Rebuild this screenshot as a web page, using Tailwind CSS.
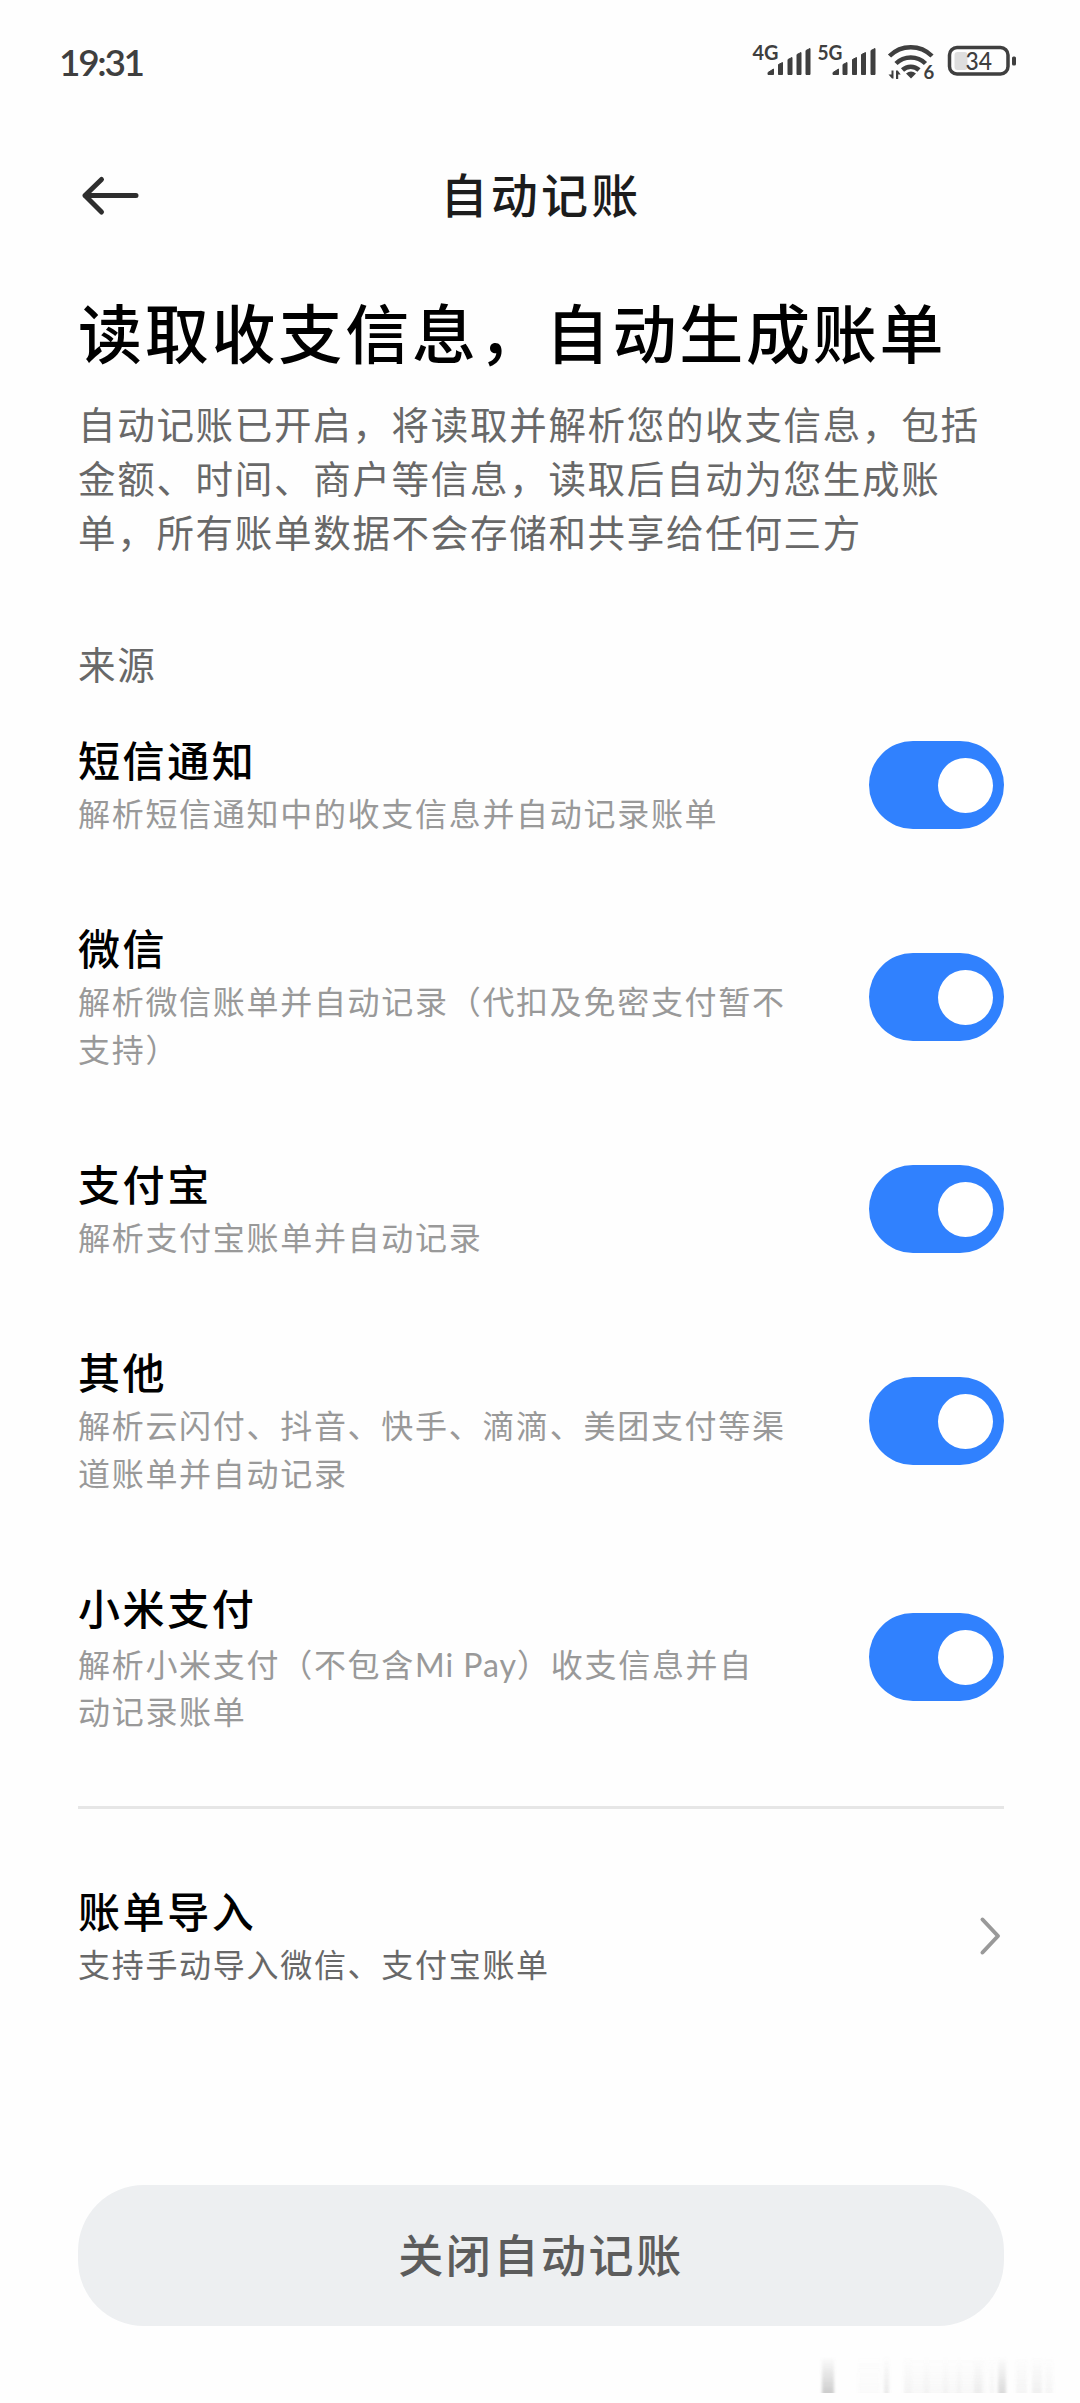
<!DOCTYPE html>
<html lang="zh-CN">

<head>
    <meta charset="UTF-8" />
    <meta name="viewport" content="width=device-width, initial-scale=1.0" />
    <title>自动记账</title>
    <script src="https://cdn.jsdelivr.net/npm/@tailwindcss/browser@4"></script>
</head>

<body class="bg-[#fefefe] font-['Noto_Sans_CJK_SC',sans-serif] select-none">
    <div class="w-[1080px] h-[2403px] flex flex-col overflow-hidden">
        <!-- Status bar -->
        <div class="h-[122px] shrink-0 flex items-center justify-between pl-[59px] pr-[60px]">
            <span class="font-['Lato',sans-serif] font-semibold text-[37px] leading-none tracking-[-2.300px] text-[#3f3f3f]">19:31</span>
            <svg class="w-[270px] h-[48px] mt-[2px]" viewBox="750 38 270 48" fill="#3f3f3f" aria-hidden="true">
                <g font-family="Lato, sans-serif" font-weight="700">
                    <text x="752.5" y="60" font-size="21" textLength="26" lengthAdjust="spacingAndGlyphs">4G</text>
                    <text x="817.5" y="60" font-size="21" textLength="25" lengthAdjust="spacingAndGlyphs">5G</text>
                    <text x="923.5" y="79" font-size="18.500">6</text>
                </g>
                <g id="signal" stroke="#3f3f3f" stroke-width="1" stroke-linejoin="round">
                    <path d="M768 74.500v-2l5.500-3.500v5.500zM778.500 74.500v-10l4-2v12zM788 74.500v-15l4-2v17zM797 74.500v-20l4-2v22zM806 74.500v-24l4-2v26z" />
                    <path d="M833 74.500v-2l5.500-3.500v5.500zM843 74.500v-10l4-2v12zM852.500 74.500v-15l4-2v17zM861.500 74.500v-20l4-2v22zM871 74.500v-24l4-2v26z" />
                </g>
                <g fill="none" stroke="#3f3f3f" stroke-width="4.500">
                    <path d="M889.500 56a30 30 0 0 1 42.500 0" />
                    <path d="M896 63.500a21 21 0 0 1 29.500 0" />
                    <path d="M902.500 70a12 12 0 0 1 16.500 0" />
                </g>
                <path d="M906 73.500q5-4 10 0l-5 5zM891.500 70.500h2v8h-1.500l-3.500-4h3zM896 70.500h1.700l3 4h-2.500v4.500h-2.200z" />
                <rect x="949.500" y="47.500" width="58.500" height="26.500" rx="7.500" fill="none" stroke="#3f3f3f" stroke-width="3.500" />
                <rect x="954.500" y="52" width="13" height="18" rx="3" fill="#dedede" />
                <text x="965.500" y="69.500" font-size="24.500" textLength="26.500" lengthAdjust="spacingAndGlyphs" font-family="Lato, sans-serif" font-weight="500">34</text>
                <rect x="1012" y="56.500" width="4" height="9" rx="1.500" />
            </svg>
        </div>

        <!-- Title bar -->
        <header class="h-[146px] shrink-0 grid grid-cols-[1fr_auto_1fr] items-center pl-[78px] pr-[76px]">
            <svg class="w-[64px] h-[44px]" viewBox="78 173 64 44" fill="none" stroke="#2e2e2e" stroke-width="5" stroke-linecap="round" stroke-linejoin="round">
                <path d="M136 195.500H85M101.500 179.500L85 195.500l16.500 16.500" />
            </svg>
            <h1 class="-mt-[5px] text-[47px] leading-[60px] font-medium tracking-[3.300px] text-[#1c1c1c]">自动记账</h1>
        </header>

        <main class="pl-[78px] pr-[76px]">
            <h2 class="pt-[20px] text-[64px] leading-[84px] font-medium tracking-[2.800px] text-black whitespace-nowrap">读取收支信息，自动生成账单</h2>
            <p class="pt-[24px] text-[37.500px] leading-[54px] tracking-[1.700px] text-[#686868] whitespace-nowrap">
                自动记账已开启，将读取并解析您的收支信息，包括<br />金额、时间、商户等信息，读取后自动为您生成账<br />单，所有账单数据不会存储和共享给任何三方
            </p>
            <h3 class="pt-[78px] pb-px text-[37.500px] leading-[54px] tracking-[1.700px] text-[#686868]">来源</h3>

            <ul id="sources">
                <li class="flex items-center justify-between py-[41px]">
                    <div class="-mt-[2px] mb-[2px]">
                        <h4 class="text-[42px] leading-[58px] font-medium tracking-[2.600px] text-black">短信通知</h4>
                        <p class="text-[32px] leading-[48px] tracking-[1.700px] text-[#999]">解析短信通知中的收支信息并自动记录账单</p>
                    </div>
                    <span class="w-[135px] h-[88px] rounded-full bg-[#3081fe] flex items-center justify-end pr-[11px]"><i class="size-[55px] rounded-full bg-white"></i></span>
                </li>
                <li class="flex items-center justify-between py-[41px]">
                    <div class="-mt-[2px] mb-[2px]">
                        <h4 class="text-[42px] leading-[58px] font-medium tracking-[2.600px] text-black">微信</h4>
                        <p class="text-[32px] leading-[48px] tracking-[1.700px] text-[#999]">解析微信账单并自动记录（代扣及免密支付暂不<br />支持）</p>
                    </div>
                    <span class="w-[135px] h-[88px] rounded-full bg-[#3081fe] flex items-center justify-end pr-[11px]"><i class="size-[55px] rounded-full bg-white"></i></span>
                </li>
                <li class="flex items-center justify-between py-[41px]">
                    <div class="-mt-[2px] mb-[2px]">
                        <h4 class="text-[42px] leading-[58px] font-medium tracking-[2.600px] text-black">支付宝</h4>
                        <p class="text-[32px] leading-[48px] tracking-[1.700px] text-[#999]">解析支付宝账单并自动记录</p>
                    </div>
                    <span class="w-[135px] h-[88px] rounded-full bg-[#3081fe] flex items-center justify-end pr-[11px]"><i class="size-[55px] rounded-full bg-white"></i></span>
                </li>
                <li class="flex items-center justify-between py-[41px]">
                    <div class="-mt-[2px] mb-[2px]">
                        <h4 class="text-[42px] leading-[58px] font-medium tracking-[2.600px] text-black">其他</h4>
                        <p class="text-[32px] leading-[48px] tracking-[1.700px] text-[#999]">解析云闪付、抖音、快手、滴滴、美团支付等渠<br />道账单并自动记录</p>
                    </div>
                    <span class="w-[135px] h-[88px] rounded-full bg-[#3081fe] flex items-center justify-end pr-[11px]"><i class="size-[55px] rounded-full bg-white"></i></span>
                </li>
                <li class="flex items-center justify-between py-[41px]">
                    <div class="-mt-[2px]">
                        <h4 class="text-[42px] leading-[58px] font-medium tracking-[2.600px] text-black">小米支付</h4>
                        <p class="pt-[4px] text-[32px] leading-[47px] tracking-[1.700px] text-[#999]">解析小米支付（不包含<span class="font-['Lato',sans-serif] leading-none tracking-[1px]">Mi Pay</span>）收支信息并自<br />动记录账单</p>
                    </div>
                    <span class="w-[135px] h-[88px] rounded-full bg-[#3081fe] flex items-center justify-end pr-[11px]"><i class="size-[55px] rounded-full bg-white"></i></span>
                </li>
            </ul>

            <hr class="mt-[31px] border-0 h-[3px] bg-[#e6e6e6]" />

            <a class="mt-[72px] flex items-center justify-between">
                <div>
                    <h4 class="text-[42px] leading-[58px] font-medium tracking-[2.600px] text-black">账单导入</h4>
                    <p class="text-[32px] leading-[48px] tracking-[1.700px] text-[#686868]">支持手动导入微信、支付宝账单</p>
                </div>
                <svg class="w-[26px] h-[44px] mt-[3px]" viewBox="0 0 26 44" fill="none" stroke="#999" stroke-width="4" stroke-linecap="round" stroke-linejoin="round">
                    <path d="M4.500 5.500L20 22L4.500 38.500" />
                </svg>
            </a>

            <button class="mt-[198px] w-full h-[141px] rounded-[66px] bg-[#edeff1] text-[45px] font-medium tracking-[2.600px] text-[#5c5c5c] block pb-[4px]">关闭自动记账</button>
        </main>

        <!-- Faded strip at the lower edge -->
        <svg class="mt-[28px] ml-[810px] w-[250px] h-[39px] shrink-0" viewBox="810 2353 250 39" aria-hidden="true">
            <defs>
                <linearGradient id="fade" x1="0" y1="0" x2="0" y2="1">
                    <stop offset="0" stop-color="#888" stop-opacity="0" />
                    <stop offset="1" stop-color="#888" stop-opacity="1" />
                </linearGradient>
                <filter id="soft" x="-50%" width="200%" y="0" height="100%">
                    <feGaussianBlur stdDeviation="1.500 0" />
                </filter>
            </defs>
            <g fill="url(#fade)" filter="url(#soft)">
                <rect x="822" y="2355" width="12" height="37" opacity=".42" />
                <rect x="858" y="2355" width="22" height="37" opacity=".03" />
                <rect x="884" y="2355" width="5" height="37" opacity=".17" />
                <rect x="904" y="2355" width="8" height="37" opacity=".09" />
                <rect x="912" y="2355" width="74" height="37" opacity=".05" />
                <rect x="924" y="2355" width="5" height="37" opacity=".05" />
                <rect x="943" y="2355" width="5" height="37" opacity=".05" />
                <rect x="957" y="2355" width="4" height="37" opacity=".06" />
                <rect x="974" y="2355" width="8" height="37" opacity=".1" />
                <rect x="989" y="2355" width="6" height="37" opacity=".06" />
                <rect x="998" y="2355" width="8" height="37" opacity=".3" />
                <rect x="1016" y="2355" width="11" height="37" opacity=".08" />
                <rect x="1032" y="2355" width="10" height="37" opacity=".12" />
                <rect x="1045" y="2355" width="8" height="37" opacity=".07" />
            </g>
        </svg>
    </div>
</body>

</html>
